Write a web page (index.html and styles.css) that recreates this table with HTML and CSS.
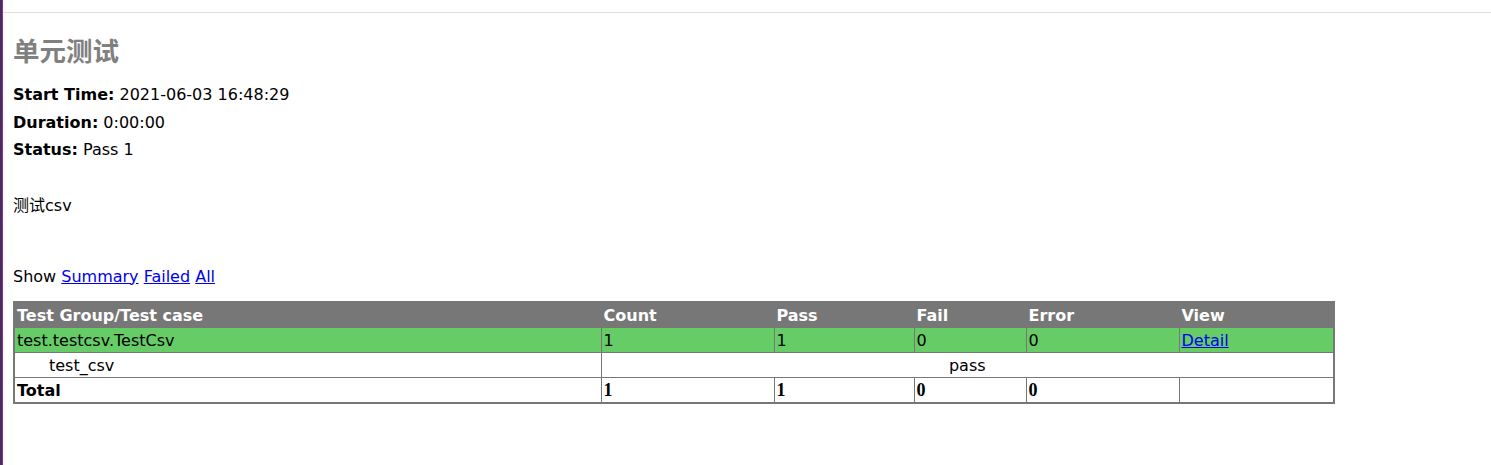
FILE: index.html
```html
<!DOCTYPE html>
<html lang="zh">
<head>
<meta charset="utf-8">
<title>单元测试</title>
<link rel="stylesheet" href="styles.css">
</head>
<body>
<div class="frame">
  <div class="edge"></div>
  <div class="page">
    <div class="topbar"></div>
    <div class="content">
      <div class="heading">
        <h1 class="title">单元测试</h1>
        <p class="attribute"><strong>Start Time:</strong> 2021-06-03 16:48:29</p>
        <p class="attribute"><strong>Duration:</strong> 0:00:00</p>
        <p class="attribute"><strong>Status:</strong> Pass 1</p>
        <p class="description">测试csv</p>
      </div>
      <p class="show-line">Show <a href="#">Summary</a> <a href="#">Failed</a> <a href="#">All</a></p>
      <table class="result-table">
        <colgroup>
          <col class="c1"><col class="c2"><col class="c3"><col class="c4"><col class="c5"><col class="c6">
        </colgroup>
        <tr class="header-row">
          <td>Test Group/Test case</td>
          <td>Count</td>
          <td>Pass</td>
          <td>Fail</td>
          <td>Error</td>
          <td>View</td>
        </tr>
        <tr class="pass-class">
          <td>test.testcsv.TestCsv</td>
          <td>1</td>
          <td>1</td>
          <td>0</td>
          <td>0</td>
          <td><a href="#">Detail</a></td>
        </tr>
        <tr class="case-row">
          <td><div class="testcase">test_csv</div></td>
          <td colspan="5" class="case-status">pass</td>
        </tr>
        <tr class="total-row">
          <td>Total</td>
          <td class="num">1</td>
          <td class="num">1</td>
          <td class="num">0</td>
          <td class="num">0</td>
          <td>&nbsp;</td>
        </tr>
      </table>
    </div>
  </div>
</div>
</body>
</html>
```
FILE: styles.css
```css
html, body {
  margin: 0;
  padding: 0;
  background: #ffffff;
}

body {
  font-family: "DejaVu Sans", "Noto Sans CJK SC", sans-serif;
  font-size: 16px;
  line-height: 19px;
  color: #000;
}

.frame {
  display: flex;
  min-height: 100vh;
}

.edge {
  width: 3px;
  flex: 0 0 3px;
  background: linear-gradient(to right, #4b2d58 0, #4b2d58 2px, #8e2bb8 2px, #8e2bb8 3px);
}

.page {
  flex: 1;
}

.topbar {
  height: 12px;
  border-bottom: 1px solid #dddddd;
}

.content {
  padding-left: 10px;
}

.title {
  margin: 19px 0 0 0;
  font-family: "Noto Sans CJK SC", sans-serif;
  font-size: 26.5px;
  line-height: 36px;
  font-weight: bold;
  color: #808080;
}

.attribute {
  margin: 8.5px 0 0 0;
}

.heading .attribute:first-of-type {
  margin-top: 17px;
}

.description {
  margin: 36.5px 0 0 0;
}

.show-line {
  margin: 52px 0 0 0;
}

a {
  color: #0000ee;
  text-decoration: underline;
}

.result-table {
  margin-top: 15.5px;
  width: 1322px;
  border-collapse: collapse;
  border: 2px solid #777;
  table-layout: fixed;
}

.c1 { width: 587px; }
.c2 { width: 173px; }
.c3 { width: 140px; }
.c4 { width: 112px; }
.c5 { width: 153px; }

.result-table td {
  border: 1px solid #777;
  padding: 3px 2px 2px 2px;
  line-height: 19px;
  text-align: left;
  white-space: nowrap;
}

.header-row td {
  font-weight: bold;
  color: #fff;
  background-color: #777;
}

.pass-class td {
  background-color: #66cc66;
}

.testcase {
  margin-left: 32px;
}

.result-table td.case-status {
  text-align: center;
}

.total-row td {
  font-weight: bold;
}

.total-row td.num {
  font-family: "Liberation Serif", serif;
  font-size: 18px;
}
```
